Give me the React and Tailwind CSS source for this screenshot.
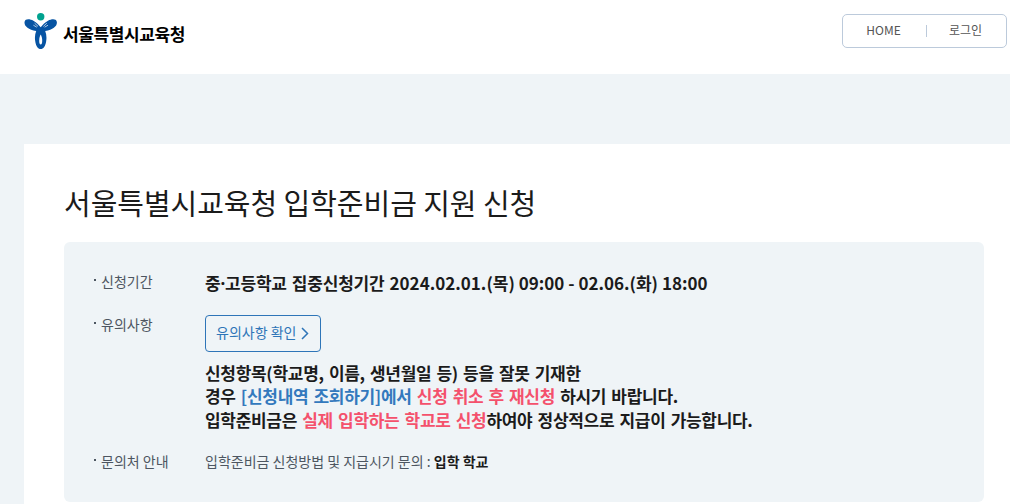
import React from 'react';

function Logo() {
  return (
    <div className="flex items-center">
      <svg width="34" height="38" viewBox="0 0 34 38" fill="none">
        <circle cx="16.7" cy="4.7" r="3.7" fill="#00a28f" />
        <path
          d="M0.6 9.8C1.4 6.4 6 7 9.4 8.8C12.8 10.6 14.6 12.8 16.7 15.2C18.8 12.8 20.6 10.6 24 8.8C27.4 7 32 6.4 32.8 9.8C33.6 13.8 29.4 17.6 21.2 19C22.4 22 22.8 25.4 22.2 29C21.4 34.4 19.4 37 16.7 37C14 37 12 34.4 11.2 29C10.6 25.4 11 22 12.2 19C4 17.6 -0.2 13.8 0.6 9.8Z"
          fill="#0754a3"
        />
        <path d="M16.7 22.4C14.8 25 14.6 32.6 16.7 32.6C18.8 32.6 18.6 25 16.7 22.4Z" fill="#fff" />
        <path d="M9.4 13.2L12.8 15.2M10.6 11.2L14 14.4M24 13.2L20.6 15.2M22.8 11.2L19.4 14.4" stroke="#d5e4f2" strokeWidth="0.8" />
      </svg>
      <span className="mt-[6px] ml-[5px] text-[17px] leading-[24px] font-bold tracking-[-0.4px] text-black">
        서울특별시교육청
      </span>
    </div>
  );
}

function Row({ label, className, children }) {
  return (
    <div className={`flex ${className}`}>
      <div className="flex w-[111px] shrink-0 text-[14px] leading-[20px] text-[#4d5661]">
        <span className="mt-[8px] mr-[5px] h-[2px] w-[2px] bg-[#4d5661]" />
        {label}
      </div>
      <div>{children}</div>
    </div>
  );
}

export default function App() {
  return (
    <div className="h-[504px] w-[1010px] overflow-hidden bg-[#eff4f7] font-['Noto_Sans_CJK_KR',sans-serif]">
      {/* Header */}
      <header className="flex h-[74px] items-start justify-between bg-white pt-[12px] pr-[3px] pl-[24px]">
        <Logo />
        <nav className="mt-[2px] flex h-[34px] w-[165px] items-center rounded-[5px] border border-[#bccadb] text-[12px] text-[#555]">
          <a className="w-[83px] pr-[2px] pb-[2px] text-center">HOME</a>
          <span className="mb-px h-[12px] w-px bg-[#bccadb]" />
          <a className="flex-1 pr-[2px] pb-[2px] text-center">로그인</a>
        </nav>
      </header>

      {/* Content */}
      <main className="mt-[70px] ml-[24px] h-[360px] bg-white pt-[37px] pl-[40px]">
        <h1 className="text-[29px] leading-[43px] tracking-[-0.04px] text-[#1b1b1b]">
          서울특별시교육청 입학준비금 지원 신청
        </h1>

        <section className="mt-[18px] h-[260px] w-[920px] rounded-[6px] bg-[#eff4f7] pt-[29px] pl-[30px]">
          <Row label="신청기간" className="h-[43px]">
            <p className="text-[17px] leading-[24px] font-bold tracking-[-0.2px] [word-spacing:1.4px] text-[#1b1b1b]">
              중<span className="font-['Noto_Sans']">·</span>고등학교 집중신청기간{' '}
              <span className="tracking-normal [word-spacing:0px]">2024.02.01.(목) 09:00 - 02.06.(화) 18:00</span>
            </p>
          </Row>
          <Row label="유의사항" className="h-[137px]">
            <button className="mt-px flex h-[37px] w-[116px] items-center rounded-[4px] border border-[#2e75b8] pb-[2px] pl-[10px] text-[14px] text-[#2e75b8]">
              유의사항 확인
              <svg className="mt-px ml-[5px]" width="8" height="13" viewBox="0 0 8 13" fill="none">
                <path d="M1 1L6.5 6.5L1 12" stroke="#2e75b8" strokeWidth="1.5" />
              </svg>
            </button>
            <p className="mt-[9px] text-[17px] leading-[23.4px] font-bold tracking-[-0.3px] [word-spacing:1.6px] whitespace-nowrap text-[#1b1b1b]">
              신청항목(학교명, 이름, 생년월일 등) 등을 잘못 기재한
              <br />
              경우 <span className="text-[#3379bd]">[신청내역 조회하기]에서</span>{' '}
              <span className="text-[#f4516c]">신청 취소 후 재신청</span> 하시기 바랍니다.
              <br />
              입학준비금은 <span className="text-[#f4516c]">실제 입학하는 학교로 신청</span>하여야
              정상적으로 지급이 가능합니다.
            </p>
          </Row>
          <Row label="문의처 안내" className="">
            <p className="text-[14px] leading-[21px] text-[#4d5661]">
              입학준비금 신청방법 및 지급시기 문의 :{' '}
              <b className="font-bold text-[#1b1b1b]">입학 학교</b>
            </p>
          </Row>
        </section>
      </main>
    </div>
  );
}
